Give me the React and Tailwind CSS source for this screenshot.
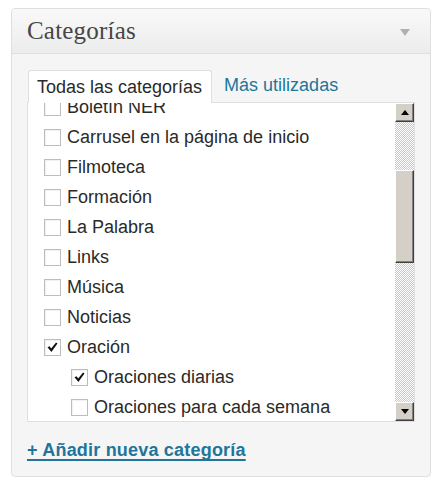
import React from 'react'

const ITEMS = [
  { label: 'Boletín NER' },
  { label: 'Carrusel en la página de inicio' },
  { label: 'Filmoteca' },
  { label: 'Formación' },
  { label: 'La Palabra' },
  { label: 'Links' },
  { label: 'Música' },
  { label: 'Noticias' },
  { label: 'Oración', checked: true },
  { label: 'Oraciones diarias', checked: true, child: true },
  { label: 'Oraciones para cada semana', child: true },
]

function Check({ checked }) {
  return (
    <span className="w-[17px] h-[17px] shrink-0 bg-white border border-[#bdbdbd] shadow-[inset_1px_1px_1px_rgba(0,0,0,0.06)] flex items-center justify-center">
      {checked && (
        <svg width="11" height="11" viewBox="0 0 11 11">
          <path d="M0.5 5.2 L2.6 4.2 L4.2 6.4 L9 0.5 L10.5 1.6 L4.4 10 Z" fill="#111" />
        </svg>
      )}
    </span>
  )
}

function ScrollButton({ up }) {
  return (
    <div className="h-[19px] w-[19px] bg-[#d4d0c8] border-t border-l border-t-white border-l-white border-r border-b border-r-[#404040] border-b-[#404040] shadow-[inset_-1px_-1px_0_#808080] flex items-center justify-center">
      <svg width="8" height="5" viewBox="0 0 8 5">
        {up ? <path d="M4 0 L8 5 L0 5 Z" fill="#000" /> : <path d="M0 0 L8 0 L4 5 Z" fill="#000" />}
      </svg>
    </div>
  )
}

export default function App() {
  return (
    <div className="w-[442px] h-[479px] bg-white pt-[8px] px-[11px] font-['Liberation_Sans',Arial,sans-serif]">
      <div className="w-[420px] h-[469px] border border-[#dfdfdf] rounded-[4px] bg-[#f5f5f5] overflow-hidden flex flex-col">
        {/* header */}
        <div className="h-[45px] shrink-0 border-b border-[#dfdfdf] bg-gradient-to-b from-[#f9f9f9] to-[#ececec] flex items-center justify-between pl-[15px] pr-[20px]">
          <h3 className="font-['Liberation_Serif',Georgia,serif] text-[25px] text-[#464646] leading-none pb-[2px] tracking-[0.2px]">Categorías</h3>
          <svg width="10" height="7" viewBox="0 0 10 7" className="mt-[2px]">
            <path d="M0 0 L10 0 L5 7 Z" fill="#b0b0b0" />
          </svg>
        </div>

        {/* body */}
        <div className="px-[15px] pt-[15px] flex flex-col">
          <div className="flex items-end text-[18px] h-[33px]">
            <div className="ml-[1px] h-[33px] pl-[8px] pr-[9px] border border-[#dfdfdf] border-b-0 rounded-t-[3px] bg-white text-[#2a2a2a] flex items-center relative -mb-px z-10">
              Todas las categorías
            </div>
            <div className="h-[33px] px-[12px] text-[#21759b] flex items-center">Más utilizadas</div>
          </div>

          <div className="h-[320px] w-[388px] border border-[#dfdfdf] bg-white flex">
            <div className="flex-1 overflow-hidden">
              <div className="-mt-[11px] pl-[16px] text-[18px] text-[#2a2a2a]">
                {ITEMS.map((it) => (
                  <div key={it.label} className={`h-[30px] flex items-center gap-[6px] ${it.child ? 'pl-[27px]' : ''}`}>
                    <Check checked={it.checked} />
                    <span className="whitespace-nowrap">{it.label}</span>
                  </div>
                ))}
              </div>
            </div>
            <div className="w-[19px] flex flex-col bg-[repeating-conic-gradient(#c8c8c8_0_25%,#fff_0_50%)] bg-[length:2px_2px]">
              <ScrollButton up />
              <div className="h-[48px]" />
              <div className="h-[93px] bg-[#d4d0c8] border-t border-l border-t-white border-l-white border-r border-b border-r-[#404040] border-b-[#404040] shadow-[inset_-1px_-1px_0_#808080]" />
              <div className="flex-1" />
              <ScrollButton />
            </div>
          </div>

          <a href="#" className="mt-[15px] font-bold text-[18px] text-[#21759b] underline underline-offset-[3px] decoration-[2px] [text-decoration-skip-ink:none] tracking-[0.2px]">
            + Añadir nueva categoría
          </a>
        </div>
      </div>
    </div>
  )
}
